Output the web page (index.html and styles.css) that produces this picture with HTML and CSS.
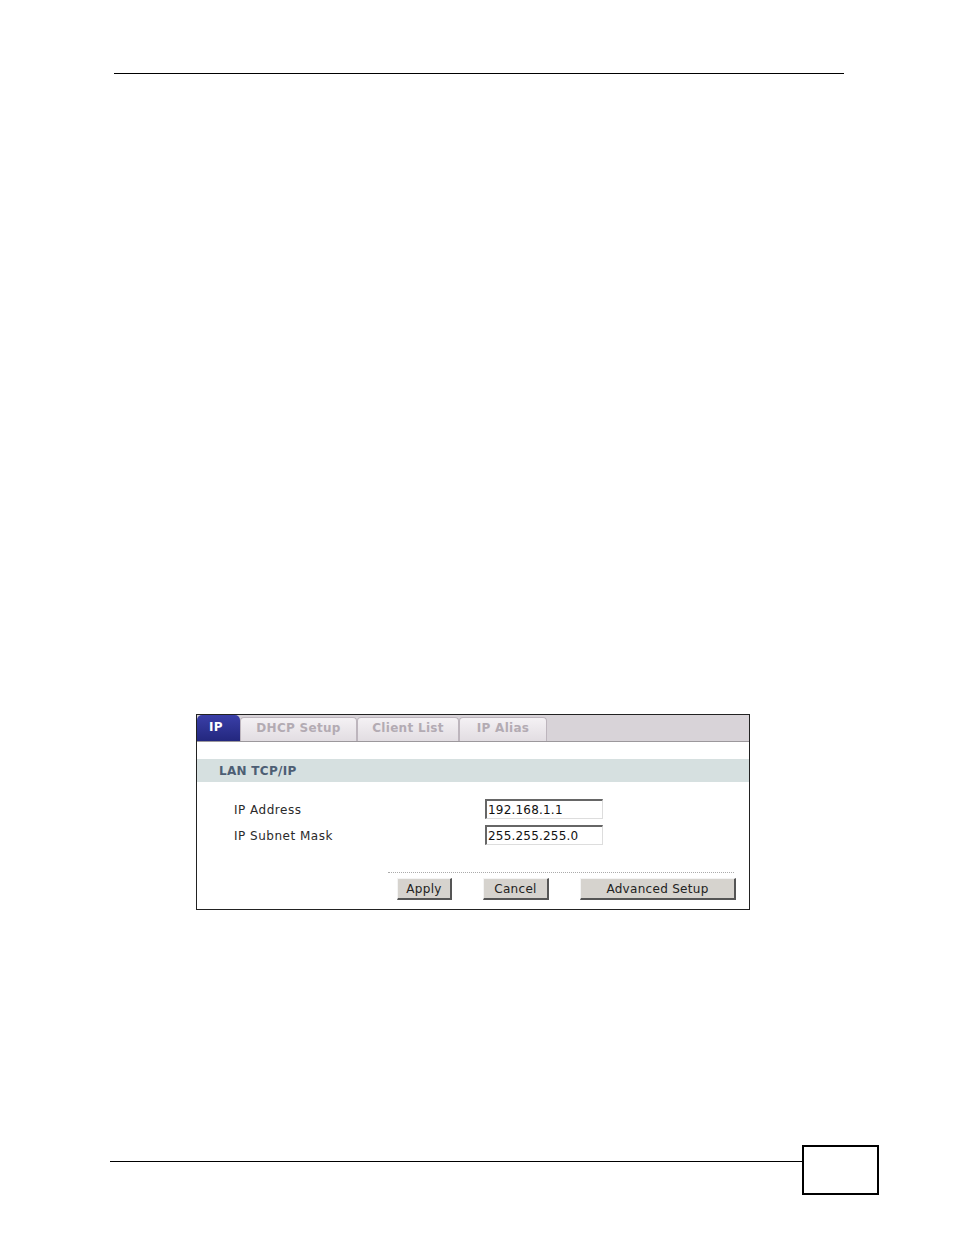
FILE: index.html
```html
<!DOCTYPE html>
<html>
<head>
<meta charset="utf-8">
<link rel="stylesheet" href="styles.css">
</head>
<body>
<div class="page">
  <div class="header-rule"></div>
  <div class="figure">
    <div class="tabs">
      <div class="tab active">IP</div>
      <div class="tab t-dhcp">DHCP Setup</div>
      <div class="tab t-client">Client List</div>
      <div class="tab t-alias">IP Alias</div>
    </div>
    <div class="section-title">LAN TCP/IP</div>
    <div class="form">
      <div class="row">
        <div class="label">IP Address</div>
        <div class="input">192.168.1.1</div>
      </div>
      <div class="row">
        <div class="label">IP Subnet Mask</div>
        <div class="input">255.255.255.0</div>
      </div>
    </div>
    <div class="actions">
      <div class="dots"></div>
      <div class="buttons">
        <div class="btn b-apply">Apply</div>
        <div class="btn b-cancel">Cancel</div>
        <div class="btn b-adv">Advanced Setup</div>
      </div>
    </div>
  </div>
  <div class="footer">
    <div class="footer-rule"></div>
    <div class="page-box"></div>
  </div>
</div>
</body>
</html>
```
FILE: styles.css
```css
html, body { margin: 0; padding: 0; background: #fff; }
.page { width: 954px; height: 1235px; overflow: hidden; font-family: "DejaVu Sans", Verdana, sans-serif; }
.header-rule { margin: 73px 0 0 114px; width: 730px; height: 1px; background: #000; }
.figure {
  margin: 640px 0 0 196px;
  width: 554px;
  box-sizing: border-box;
  border: 1px solid #222;
  background: #fff;
}
.tabs {
  display: flex;
  height: 26px;
  background: #d8d3d8;
  border-bottom: 1px solid #9c989c;
  align-items: flex-end;
}
.tab {
  box-sizing: border-box;
  height: 24px;
  font-size: 12px;
  font-weight: bold;
  color: #b3abb3;
  display: flex;
  align-items: center;
  justify-content: center;
  padding-bottom: 3px;
  background: linear-gradient(#f4f1f4, #e2dde2);
  border: 1px solid #bdb5bd;
  border-bottom: none;
  border-radius: 4px 4px 0 0;
  letter-spacing: 0.3px;
}
.tab.active {
  height: 26px;
  width: 43px;
  background: linear-gradient(#3a3fa8, #23277e);
  color: #fff;
  border: none;
  border-radius: 5px 5px 0 0;
  justify-content: flex-start;
  padding-left: 12px;
}
.t-dhcp { width: 117px; }
.t-client { width: 102px; }
.t-alias { width: 88px; }
.section-title {
  margin-top: 17px;
  height: 23px;
  background: #d6e0e0;
  font-size: 12px;
  font-weight: bold;
  color: #4d5e74;
  display: flex;
  align-items: center;
  padding-left: 22px;
  letter-spacing: 0.3px;
}
.form { padding: 17px 0 0 37px; display: flex; flex-direction: column; gap: 6px; }
.row { display: flex; align-items: center; height: 20px; }
.label { width: 251px; font-size: 12px; color: #2a2a2a; letter-spacing: 0.5px; padding-top: 2px; }
.input {
  box-sizing: border-box;
  width: 118px;
  height: 20px;
  border-top: 2px solid #666;
  border-left: 2px solid #666;
  border-right: 1px solid #ddd;
  border-bottom: 1px solid #ddd;
  font-size: 12px;
  color: #111;
  padding-left: 1px;
  display: flex;
  align-items: center;
  letter-spacing: 0.2px;
}
.actions { padding: 27px 0 9px 191px; }
.dots { width: 346px; border-top: 1px dotted #aaa; }
.buttons { display: flex; gap: 31px; margin: 5px 0 0 9px; }
.btn {
  box-sizing: border-box;
  height: 22px;
  background: #d6d3ce;
  border-top: 1px solid #f4f4f4;
  border-left: 1px solid #f4f4f4;
  border-right: 2px solid #555;
  border-bottom: 2px solid #555;
  font-size: 12px;
  color: #222;
  display: flex;
  align-items: center;
  justify-content: center;
  letter-spacing: 0.3px;
}
.b-apply { width: 55px; }
.b-cancel { width: 66px; }
.b-adv { width: 156px; }
.footer { margin: 235px 0 0 110px; width: 769px; display: flex; align-items: flex-start; }
.footer-rule { flex: 1; height: 1px; background: #000; margin-top: 16px; }
.page-box { width: 77px; height: 50px; box-sizing: border-box; border: 2px solid #000; }
```
